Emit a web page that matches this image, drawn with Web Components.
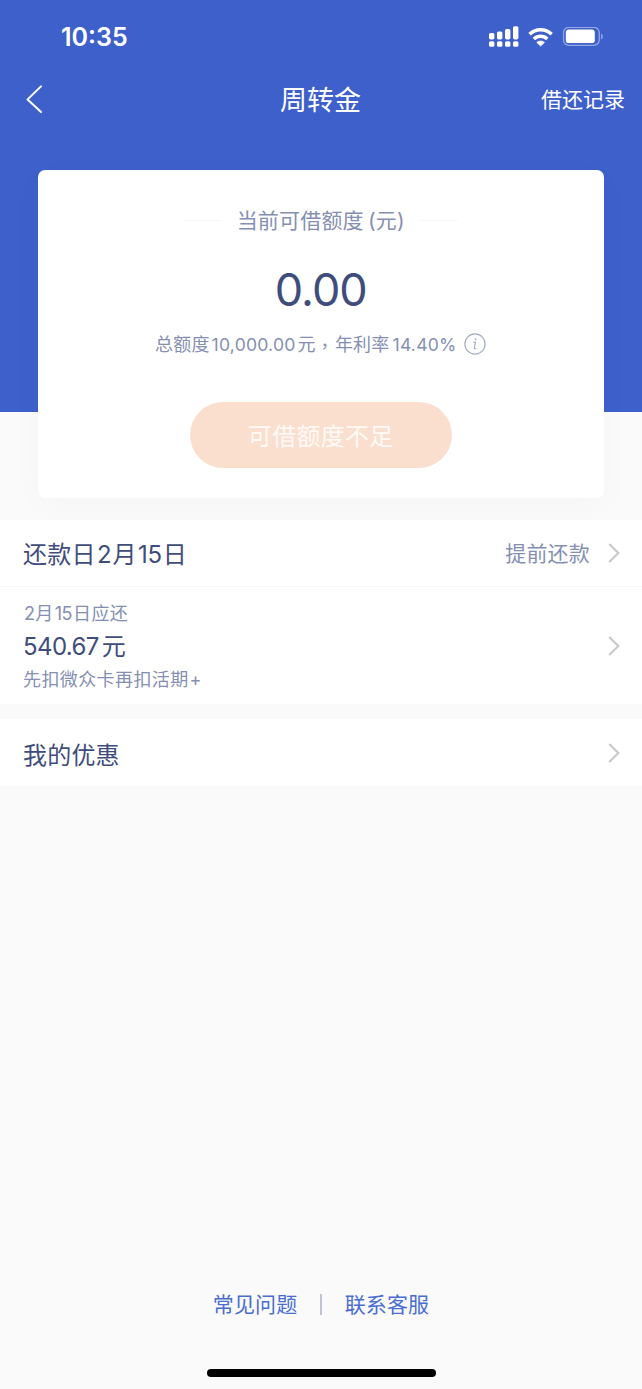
<!DOCTYPE html>
<html lang="zh-CN">
<head>
<meta charset="UTF-8">
<meta name="viewport" content="width=device-width, initial-scale=1.0">
<title>周转金</title>
<style>
  :root {
    --blue: #3e60cb;
    --page: #fafafa;
    --text-dark: #3f4d7c;
    --text-soft: #858fb2;
    --arrow: #c8c8c8;
    --link: #4a6dd0;
  }
  body {
    margin: 0;
    background: var(--page);
    font-family: Inter, "Noto Sans CJK SC", sans-serif;
    font-weight: 400;
  }
</style>
</head>
<body>
<loan-page>
  <status-bar slot="header" time="10:35"></status-bar>
  <nav-bar slot="header" action="借还记录">周转金</nav-bar>

  <quota-card caption="当前可借额度 (元)" amount="0.00" button="可借额度不足">
    <text-run>总额度</text-run><text-run class="n1">10,000.00</text-run><text-run>元</text-run><text-run class="tc">，</text-run><text-run>年利率</text-run><text-run class="n2">14.40%</text-run>
  </quota-card>

  <list-group>
    <list-row class="day">还款日<text-run class="num">2</text-run>月<text-run class="num">15</text-run>日<span slot="extra">提前还款</span></list-row>
    <bill-row>
      <span slot="date"><text-run class="num">2</text-run>月<text-run class="num">15</text-run>日应还</span>
      <span slot="sum">540.67<text-run class="yuan">元</text-run></span>
      <span slot="note">先扣微众卡再扣活期<text-run class="plus">+</text-run></span>
    </bill-row>
  </list-group>
  <list-group>
    <list-row class="offer">我的优惠</list-row>
  </list-group>

  <page-links slot="footer">
    <span slot="left">常见问题</span>
    <span slot="right">联系客服</span>
  </page-links>
</loan-page>

<script>
function attach(el, html) {
  const root = el.attachShadow({ mode: "open" });
  root.innerHTML = html;
  return root;
}

/* PAGINA */
class LoanPage extends HTMLElement {
  connectedCallback() {
    attach(this, `
      <style>
        :host { display: flex; flex-direction: column; height: 1389px; overflow: hidden; }
        header { height: 412px; flex: none; background: var(--blue); }
        main { margin-top: -242px; display: flex; flex-direction: column; }
        footer { margin-top: auto; display: flex; flex-direction: column; align-items: center; }
        .home { width: 229px; height: 8px; margin: 48px 0 12px; border-radius: 4px; background: #000; }
      </style>
      <header><slot name="header"></slot></header>
      <main><slot></slot></main>
      <footer><slot name="footer"></slot><div class="home"></div></footer>`);
  }
}

/* STATUS BAR */
class StatusBar extends HTMLElement {
  connectedCallback() {
    attach(this, `
      <style>
        :host { display: flex; justify-content: space-between; align-items: center; height: 74px; padding: 0 38px 0 61px; box-sizing: border-box; color: #fff; }
        .time { font-size: 25px; font-weight: 600; line-height: 30px; }
        .icons { display: flex; align-items: center; }
        svg { display: block; }
        .wifi { margin: 0 9px 0 8px; }
      </style>
      <span class="time">${this.getAttribute("time")}</span>
      <div class="icons">
        <svg width="31" height="22" viewBox="0 0.6 31 22" fill="#fff">
          <rect x="0" y="7.5" width="5.4" height="6.5" rx="1.6"/>
          <rect x="8" y="6" width="5.4" height="8" rx="1.6"/>
          <rect x="16" y="3.5" width="5.4" height="10.5" rx="1.6"/>
          <rect x="24" y="0.8" width="5.4" height="13.2" rx="1.6"/>
          <rect x="0" y="15.8" width="5.4" height="5.6" rx="1.6"/>
          <rect x="8" y="15.8" width="5.4" height="5.6" rx="1.6"/>
          <rect x="16" y="15.8" width="5.4" height="5.6" rx="1.6"/>
          <rect x="24" y="15.8" width="5.4" height="5.6" rx="1.6"/>
        </svg>
        <svg class="wifi" width="26" height="20" viewBox="0 0 26 20">
          <path d="M1.6 7.2C7.8 1.2 17.4 1.2 23.6 7.2" fill="none" stroke="#fff" stroke-width="3.6"/>
          <path d="M5.9 11.9C9.7 8.3 15.5 8.3 19.3 11.9" fill="none" stroke="#fff" stroke-width="3.5"/>
          <path d="M8.8 15.4C11 13.6 14.2 13.6 16.4 15.4L12.6 19Z" fill="#fff" stroke="#fff" stroke-width="0.8" stroke-linejoin="round"/>
        </svg>
        <svg width="41" height="20" viewBox="0.4 0.6 41 20">
          <rect x="0.9" y="0.9" width="35.8" height="18" rx="5.4" fill="none" stroke="#fff" stroke-opacity="0.45" stroke-width="1.3"/>
          <rect x="3.2" y="3.1" width="29" height="13.6" rx="3.2" fill="#fff"/>
          <path d="M38.6 7V13C40.6 12.2 40.6 7.8 38.6 7Z" fill="#fff" fill-opacity="0.5"/>
        </svg>
      </div>`);
  }
}

/* BARRA DE TITULO */
class NavBar extends HTMLElement {
  connectedCallback() {
    attach(this, `
      <style>
        :host { display: grid; grid-template-columns: 1fr auto 1fr; align-items: center; height: 50px; padding: 0 17px 0 25px; color: #fff; }
        svg { display: block; }
        .title { font-size: 27px; line-height: 40px; margin-right: 9px; padding-top: 3px; }
        .action { justify-self: end; font-size: 21px; line-height: 32px; padding-top: 2px; }
      </style>
      <svg width="18" height="28" viewBox="0 0 18 28"><path d="M16 1.4L2.6 14.4L16 27" fill="none" stroke="#fff" stroke-width="2" stroke-linejoin="round" stroke-linecap="round"/></svg>
      <span class="title"><slot></slot></span>
      <span class="action">${this.getAttribute("action")}</span>`);
  }
}

/* TRECHO DE TEXTO */
class TextRun extends HTMLElement {
  connectedCallback() {
    attach(this, `
      <style>
        :host { display: inline-block; }
        :host(.n1) { font-size: 17.6px; margin: 0 2px 0 2px; letter-spacing: 0.2px; }
        :host(.n2) { font-size: 17.6px; margin: 0 0 0 3px; letter-spacing: 0.2px; }
        :host(.tc) { font-family: "Noto Sans CJK TC", sans-serif; margin-right: 1px; }
        :host(.num) { margin: 0 0.05em; letter-spacing: -0.4px; }
        :host(.yuan) { margin-left: 3px; }
        :host(.plus) { margin-left: 1px; }
      </style>
      <slot></slot>`);
  }
}

/* CARTAO DE LIMITE */
class QuotaCard extends HTMLElement {
  connectedCallback() {
    attach(this, `
      <style>
        :host { display: flex; flex-direction: column; align-items: center; height: 328px; margin: 0 38px 22px 37.5px; padding-top: 37px; box-sizing: border-box; border-radius: 7px; background: #fff; box-shadow: 0 8px 36px rgba(0, 0, 0, 0.025); }
        .caption { display: flex; align-items: center; gap: 15px; font-size: 21px; line-height: 28px; letter-spacing: 0.2px; color: var(--text-soft); word-spacing: -2px; }
        .caption i { width: 38px; height: 1px; margin-top: -2px; background: #f7f7f8; }
        .amount { margin-top: 25px; font-size: 45px; line-height: 60px; letter-spacing: -1px; color: var(--text-dark); }
        .detail { display: flex; align-items: center; margin-top: 11px; font-size: 18px; line-height: 28px; letter-spacing: 0.2px; color: var(--text-soft); }
        .detail svg { margin: -2px 0 0 8px; }
        button { width: 262px; height: 66px; margin-top: 43px; padding: 0 0 2px; border: 0; border-radius: 33px; background: #fadfcf; color: #fffaf7; font: inherit; font-size: 24px; letter-spacing: 0.3px; }
      </style>
      <div class="caption"><i></i><span>${this.getAttribute("caption")}</span><i></i></div>
      <div class="amount">${this.getAttribute("amount")}</div>
      <div class="detail">
        <slot></slot>
        <svg width="22" height="22" viewBox="0 0 22 22" fill="none" stroke="#a3abc6">
          <circle cx="11" cy="11" r="10.1" stroke-width="1.2"/>
          <path d="M9.2 9.2H11.4L10.3 15.2Q10.2 16.2 12.2 15.4" stroke-width="1.1"/>
          <circle cx="11.7" cy="6.2" r="0.9" fill="#a3abc6" stroke="none"/>
        </svg>
      </div>
      <button>${this.getAttribute("button")}</button>`);
  }
}

/* LISTAS */
const arrow = `<svg width="12" height="20" viewBox="0 0 12 20"><path d="M1.2 1L10.4 10L1.2 19" fill="none" stroke="var(--arrow)" stroke-width="2"/></svg>`;

class ListGroup extends HTMLElement {
  connectedCallback() {
    attach(this, `
      <style>
        :host { display: block; margin-bottom: 15px; background: #fff; position: relative; }
      </style>
      <slot></slot>`);
  }
}

class ListRow extends HTMLElement {
  connectedCallback() {
    attach(this, `
      <style>
        :host { display: flex; align-items: center; height: 67px; padding: 0 22px 0 23px; box-sizing: border-box; font-size: 24px; line-height: 36px; color: var(--text-dark); }
        :host(.day) { border-bottom: 1px solid #f6f6f6; letter-spacing: 0.3px; }
        .label { flex: 1; padding-top: 3px; }
        :host(.offer) .label { padding-top: 6px; letter-spacing: 0.2px; }
        .extra { font-size: 21px; letter-spacing: 0.2px; padding-top: 2px; color: var(--text-soft); margin-right: 18px; }
        svg { display: block; }
      </style>
      <span class="label"><slot></slot></span>
      <span class="extra"><slot name="extra"></slot></span>
      ${arrow}`);
  }
}

class BillRow extends HTMLElement {
  connectedCallback() {
    attach(this, `
      <style>
        :host { display: flex; align-items: center; height: 117px; padding: 0 22px 0 23px; box-sizing: border-box; }
        .info { flex: 1; display: flex; flex-direction: column; padding-top: 2px; color: var(--text-soft); font-size: 18px; line-height: 30px; letter-spacing: 0.4px; }
        .sum { font-size: 24px; line-height: 36px; letter-spacing: -0.6px; color: var(--text-dark); }
        svg { display: block; }
      </style>
      <div class="info">
        <slot name="date"></slot>
        <div class="sum"><slot name="sum"></slot></div>
        <slot name="note"></slot>
      </div>
      ${arrow}`);
  }
}

/* LINKS DO RODAPE */
class PageLinks extends HTMLElement {
  connectedCallback() {
    attach(this, `
      <style>
        :host { display: flex; align-items: center; gap: 23px; font-size: 21px; line-height: 32px; letter-spacing: 0.1px; color: var(--link); }
        i { width: 1.5px; height: 21px; margin-top: -1px; background: #bfc3d3; }
      </style>
      <slot name="left"></slot><i></i><slot name="right"></slot>`);
  }
}

customElements.define("loan-page", LoanPage);
customElements.define("status-bar", StatusBar);
customElements.define("nav-bar", NavBar);
customElements.define("text-run", TextRun);
customElements.define("quota-card", QuotaCard);
customElements.define("list-group", ListGroup);
customElements.define("list-row", ListRow);
customElements.define("bill-row", BillRow);
customElements.define("page-links", PageLinks);
</script>
</body>
</html>
